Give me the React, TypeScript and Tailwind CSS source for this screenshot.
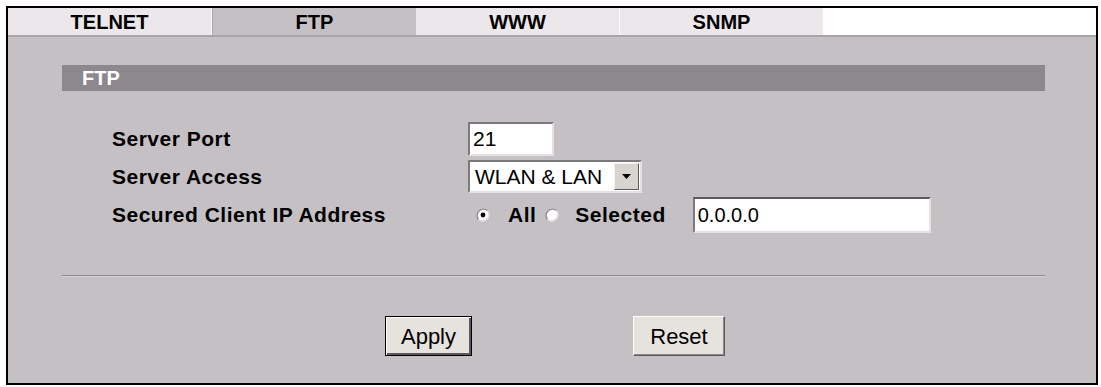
const tabs = [
  { label: "TELNET", active: false },
  { label: "FTP", active: true },
  { label: "WWW", active: false },
  { label: "SNMP", active: false },
];

function Radio({ checked }: { checked: boolean }) {
  return (
    <svg width="14" height="14" viewBox="0 0 14 14" className="shrink-0">
      <circle cx="7" cy="7" r="6.4" fill="#ffffff" />
      <path d="M2.5 11.5 A6.4 6.4 0 0 1 11.5 2.5" stroke="#8c888c" strokeWidth="1.4" fill="none" />
      <path d="M11.5 2.5 A6.4 6.4 0 0 1 2.5 11.5" stroke="#dedade" strokeWidth="1.4" fill="none" />
      {checked && <circle cx="7" cy="7" r="2.4" fill="#000000" />}
    </svg>
  );
}

export default function App() {
  return (
    <div className="w-[1101px] h-[387px] bg-white pt-[6px] pl-[6px] font-['Liberation_Sans',Arial,sans-serif] text-black">
      <div className="w-[1092px] h-[379px] border-2 border-black flex flex-col">
        {/* Tabs */}
        <div className="h-[27px] flex shrink-0">
          {tabs.map((t) => (
            <div
              key={t.label}
              className={
                t.active
                  ? "w-[204px] flex items-center justify-center bg-[#c4c0c4] border-l border-[#a8a4a8] text-[20px] font-bold"
                  : "w-[204px] flex items-center justify-center bg-[#ebe7eb] border-r border-white text-[20px] font-bold"
              }
            >
              {t.label}
            </div>
          ))}
          <div className="flex-1 bg-white" />
        </div>
        <div className="h-[2px] bg-[#a8a4a8] shrink-0" />

        {/* Content */}
        <div className="flex-1 bg-[#c4c0c4] pl-[54px] pr-[51px] pt-[28px]">
          <div className="h-[26px] bg-[#8c888c] pl-[20px] flex items-center text-white text-[20px] font-bold">
            FTP
          </div>

          <div className="mt-[31px] pl-[50px] flex flex-col gap-[4px]">
            <div className="h-[34px] flex items-center">
              <div className="w-[356px] text-[21px] font-bold tracking-[0.5px]">Server Port</div>
              <div className="w-[86px] h-[34px] bg-white border-2 border-t-[#7c787c] border-l-[#7c787c] border-b-[#e4e0e4] border-r-[#e4e0e4] pl-[3px] flex items-center text-[21px]">
                21
              </div>
            </div>

            <div className="h-[33px] flex items-center">
              <div className="w-[356px] text-[21px] font-bold tracking-[0.5px]">Server Access</div>
              <div className="w-[174px] h-[33px] bg-white border-2 border-t-[#7c787c] border-l-[#7c787c] border-b-[#e4e0e4] border-r-[#e4e0e4] flex items-center">
                <span className="flex-1 pl-[5px] text-[21px] whitespace-nowrap">WLAN &amp; LAN</span>
                <span className="w-[25px] h-[27px] mr-[1px] bg-[#d8d4d0] border border-t-[#f4f0f0] border-l-[#f4f0f0] border-b-[#5c585c] border-r-[#5c585c] flex items-center justify-center">
                  <svg width="9" height="5" viewBox="0 0 9 5">
                    <path d="M0 0 H9 L4.5 5 Z" fill="#000000" />
                  </svg>
                </span>
              </div>
            </div>

            <div className="h-[36px] flex items-center">
              <div className="w-[356px] text-[21px] font-bold tracking-[0.5px] whitespace-nowrap">Secured Client IP Address</div>
              <div className="ml-[8px] flex items-center">
                <Radio checked />
                <span className="ml-[18px] text-[21px] font-bold tracking-[0.5px]">All</span>
                <span className="ml-[9px]">
                  <Radio checked={false} />
                </span>
                <span className="ml-[16px] text-[21px] font-bold tracking-[0.5px]">Selected</span>
              </div>
              <div className="ml-[27px] w-[238px] h-[36px] bg-white border-2 border-t-[#5c585c] border-l-[#7c787c] border-b-[#e4e0e4] border-r-[#e4e0e4] pl-[3px] flex items-center text-[20px]">
                0.0.0.0
              </div>
            </div>
          </div>

          <div className="mt-[42px] h-[1px] bg-[#8c888c]" />
          <div className="h-[1px] bg-[#d4d0d4]" />

          <div className="mt-[39px] flex items-center">
            <button className="ml-[323px] w-[87px] h-[40px] border border-black bg-[#e6e2de] flex items-center justify-center text-[22px] shadow-[inset_1px_1px_0_#ffffff,inset_-2px_-2px_0_#5c585c]">
              Apply
            </button>
            <button className="ml-[161px] w-[92px] h-[40px] bg-[#e6e2de] border border-t-white border-l-white border-b-[#5c585c] border-r-[#5c585c] flex items-center justify-center text-[22px] shadow-[inset_-1px_-1px_0_#8c888c]">
              Reset
            </button>
          </div>
        </div>
      </div>
    </div>
  );
}
